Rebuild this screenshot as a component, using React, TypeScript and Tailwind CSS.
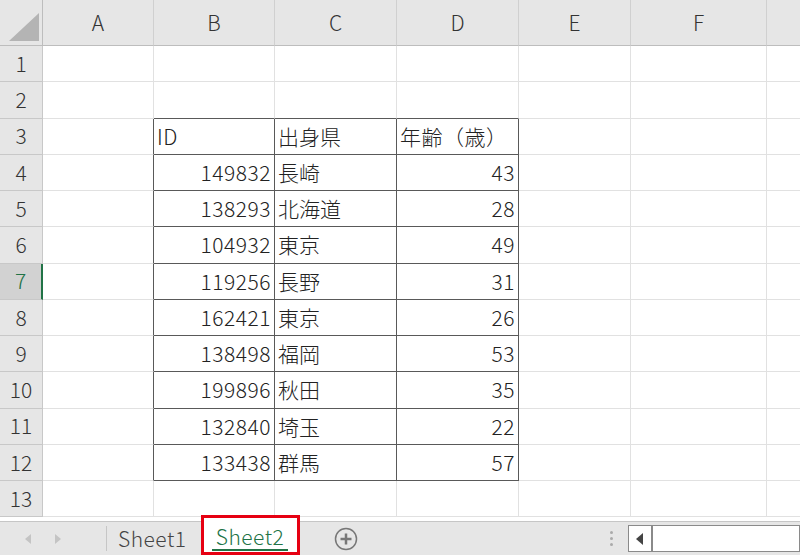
import React from "react";

const cols = ["A", "B", "C", "D", "E", "F", ""];

const data: Record<number, { id: string; pref: string; age: string; head?: boolean }> = {
  3: { id: "ID", pref: "出身県", age: "年齢（歳）", head: true },
  4: { id: "149832", pref: "長崎", age: "43" },
  5: { id: "138293", pref: "北海道", age: "28" },
  6: { id: "104932", pref: "東京", age: "49" },
  7: { id: "119256", pref: "長野", age: "31" },
  8: { id: "162421", pref: "東京", age: "26" },
  9: { id: "138498", pref: "福岡", age: "53" },
  10: { id: "199896", pref: "秋田", age: "35" },
  11: { id: "132840", pref: "埼玉", age: "22" },
  12: { id: "133438", pref: "群馬", age: "57" },
};

const font = { fontFamily: '"Noto Sans CJK JP", "Noto Sans", sans-serif' };

function RowCells({ r }: { r: number }) {
  const d = data[r];
  const inTable = !!d;
  const aboveTable = r === 2;
  const selected = r === 7;
  const base = "h-[36.25px] border-b flex items-center text-[21px] font-light text-[#222] leading-none";
  return (
    <>
      <div
        className={
          selected
            ? "h-[36.25px] border-b border-[#c8c8c8] border-r-2 border-r-[#217346] bg-[#d2d2d2] flex items-center justify-center text-[21px] font-light text-[#217346]"
            : "h-[36.25px] border-b border-r border-[#c8c8c8] bg-[#e6e6e6] flex items-center justify-center text-[21px] font-light text-[#333]"
        }
      >
        {r}
      </div>
      {/* A */}
      <div className={`${base} border-b-[#e1e1e1] border-r ${inTable ? "border-r-[#595959]" : "border-r-[#e1e1e1]"}`} />
      {/* B C D */}
      {inTable ? (
        <>
          <div className={`${base} border-b-[#595959] border-r border-r-[#595959] px-[3px] tracking-[0.5px] ${d.head ? "justify-start" : "justify-end"}`}>{d.id}</div>
          <div className={`${base} border-b-[#595959] border-r border-r-[#595959] px-[3px]`}>{d.pref}</div>
          <div className={`${base} border-b-[#595959] border-r border-r-[#595959] px-[3px] tracking-[0.5px] ${d.head ? "justify-start" : "justify-end"}`}>{d.age}</div>
        </>
      ) : (
        <>
          <div className={`${base} border-r border-r-[#e1e1e1] ${aboveTable ? "border-b-[#595959]" : "border-b-[#e1e1e1]"}`} />
          <div className={`${base} border-r border-r-[#e1e1e1] ${aboveTable ? "border-b-[#595959]" : "border-b-[#e1e1e1]"}`} />
          <div className={`${base} border-r border-r-[#e1e1e1] ${aboveTable ? "border-b-[#595959]" : "border-b-[#e1e1e1]"}`} />
        </>
      )}
      <div className={`${base} border-r border-[#e1e1e1]`} />
      <div className={`${base} border-r border-[#e1e1e1]`} />
      <div className={`${base} border-[#e1e1e1]`} />
    </>
  );
}

export default function App() {
  const rows = Array.from({ length: 13 }, (_, i) => i + 1);
  return (
    <div className="w-[800px] h-[555px] overflow-hidden bg-white flex flex-col" style={font}>
      <div className="grid grid-cols-[43px_111px_121px_122px_122px_112px_136px_1fr]">
        {/* corner */}
        <div className="h-[46px] bg-[#e6e6e6] border-b border-r border-[#bdbdbd] flex items-end justify-end pr-[3px] pb-[4px]">
          <svg width="30" height="28" viewBox="0 0 30 28">
            <polygon points="30,0 30,28 0,28" fill="#b4b4b4" />
          </svg>
        </div>
        {cols.map((c, i) => (
          <div
            key={i}
            className={`h-[46px] bg-[#e6e6e6] border-b border-[#bdbdbd] ${i < 6 ? "border-r border-r-[#d0d0d0]" : ""} flex items-center justify-center text-[21px] font-light text-[#333]`}
          >
            {c}
          </div>
        ))}
        {rows.map((r) => (
          <RowCells key={r} r={r} />
        ))}
      </div>
      <div className="h-[4px] bg-white" />
      {/* sheet tab bar */}
      <div className="flex-1 bg-[#e6e6e6] border-t border-[#c6c6c6] flex items-stretch">
        <div className="w-[107px] flex items-center gap-[22px] pl-[24px] border-r border-[#c6c6c6] my-[4px]">
          <svg width="8" height="12" viewBox="0 0 8 12"><polygon points="7,1 1,6 7,11" fill="#c4c4c4" /></svg>
          <svg width="8" height="12" viewBox="0 0 8 12"><polygon points="1,1 7,6 1,11" fill="#c4c4c4" /></svg>
        </div>
        <div className="flex items-center pl-[11px] pr-[14px] text-[21px] font-light text-[#444] tracking-[0.5px]">Sheet1</div>
        <div className="-mt-[7px] w-[99px] bg-white border-[3px] border-[#e60012] flex flex-col items-center justify-center">
          <span className="text-[21px] font-light text-[#217346] tracking-[0.5px] border-b-2 border-[#217346] px-[4px] leading-[26px] mt-[3px]">Sheet2</span>
        </div>
        <div className="flex items-center pl-[34px]">
          <svg width="24" height="24" viewBox="0 0 24 24">
            <circle cx="12" cy="12" r="10.5" fill="none" stroke="#777" strokeWidth="1.5" />
            <path d="M12 6.5v11M6.5 12h11" stroke="#777" strokeWidth="2.5" />
          </svg>
        </div>
        <div className="flex items-center pl-[252px]">
          <div className="flex flex-col gap-[3px]">
            <span className="w-[3px] h-[3px] bg-[#aaa] rounded-full" />
            <span className="w-[3px] h-[3px] bg-[#aaa] rounded-full" />
            <span className="w-[3px] h-[3px] bg-[#aaa] rounded-full" />
          </div>
        </div>
        <div className="flex items-stretch ml-[15px] my-[3px] flex-1 border border-[#8a8a8a] bg-white">
          <div className="w-[24px] border-r-2 border-[#8a8a8a] flex items-center justify-center">
            <svg width="8" height="12" viewBox="0 0 8 12"><polygon points="7,0 0,6 7,12" fill="#444" /></svg>
          </div>
          <div className="flex-1" />
        </div>
      </div>
    </div>
  );
}
